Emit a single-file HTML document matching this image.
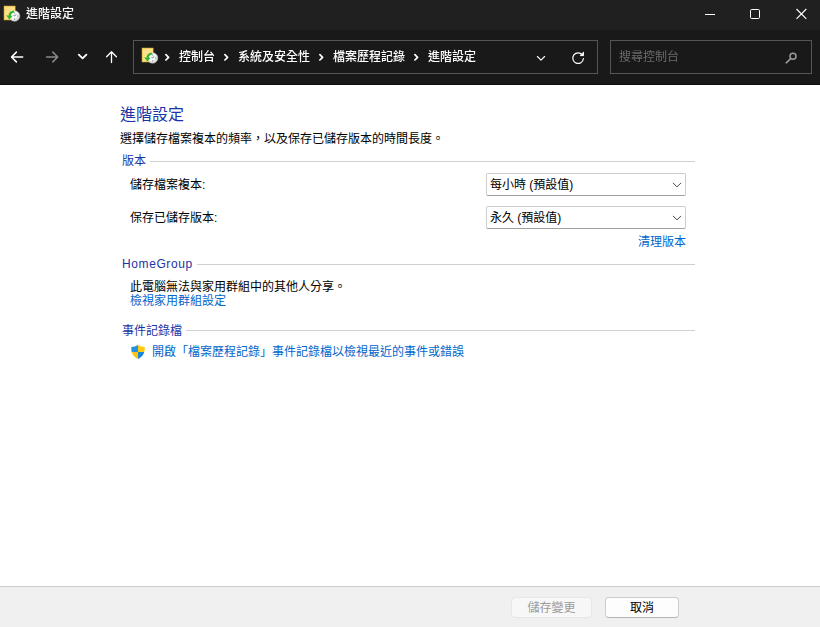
<!DOCTYPE html>
<html lang="zh-Hant">
<head>
<meta charset="utf-8">
<title>進階設定</title>
<style>
*{box-sizing:border-box;margin:0;padding:0}
html,body{width:820px;height:627px;overflow:hidden;background:#fff}
body{font-family:"Liberation Sans","Noto Sans CJK TC",sans-serif;font-size:12px;color:#000;position:relative}
.abs{position:absolute}
#titlebar{left:0;top:0;width:820px;height:30px;background:#202020}
#navbar{left:0;top:30px;width:820px;height:55px;background:#191919;border-bottom:1px solid #101010}
#title{will-change:transform;font-weight:500;left:26px;top:5px;color:#fff;font-size:12px;line-height:18px;white-space:nowrap}
.addr{left:133px;top:40px;width:465px;height:34px;border:1px solid #555;background:#191919}
.search{left:610px;top:40px;width:202px;height:34px;border:1px solid #555;background:#191919}
.crumb{will-change:transform;font-weight:500;color:#fff;font-size:12px;line-height:18px;top:48px;white-space:nowrap}
.ph{will-change:transform;color:#6a6a6a;font-size:12px;line-height:18px;top:48px;left:619px;white-space:nowrap}
svg{position:absolute;overflow:visible}
#content{left:0;top:85px;width:820px;height:501px;background:#fff}
h1{position:absolute;left:120px;top:104px;font-size:16px;font-weight:normal;color:#1b34a5;line-height:22px;white-space:nowrap}
.t{position:absolute;white-space:nowrap;font-size:12px;line-height:16px;color:#000}
.grp{color:#1b34a5}
.link{color:#0066cc}
.hr{position:absolute;height:1px;background:#d0d0d0}
.sel{position:absolute;left:486px;width:200px;height:23px;border:1px solid #cecece;border-bottom-color:#a0a0a0;background:#fff;border-radius:2px}
.sel span{position:absolute;left:3px;top:3px;font-size:12px;line-height:16px;white-space:nowrap}
#footer{left:0;top:586px;width:820px;height:41px;background:#f0f0f0;border-top:1px solid #cccccc}
.btn{position:absolute;top:597px;width:80px;height:21px;border:1px solid #cdcdcd;border-bottom-color:#b4b4b4;border-radius:4px;background:#fdfdfd;font-size:12px;line-height:21px;text-align:center}
.btn.dis{color:#9c9c9c;border-color:#e6e6e6;background:#f7f7f7}
</style>
</head>
<body>
<div id="titlebar" class="abs"></div>
<div id="navbar" class="abs"></div>
<div id="title" class="abs">進階設定</div>
<div class="abs addr"></div>
<div class="abs search"></div>
<div class="abs crumb" style="left:179px">控制台</div>
<div class="abs crumb" style="left:238px">系統及安全性</div>
<div class="abs crumb" style="left:333px">檔案歷程記錄</div>
<div class="abs crumb" style="left:428px">進階設定</div>
<div class="abs ph">搜尋控制台</div>


<!-- title icon -->
<svg style="left:3px;top:5px" width="18" height="18" viewBox="3 5 18 18">
<rect x="4.200" y="6.200" width="10.800" height="13.600" fill="#ffe08a" stroke="#ffd24d" stroke-width="0.8"/>
<defs><radialGradient id="ck1" cx="0.4" cy="0.35" r="0.75"><stop offset="0.45" stop-color="#fbfcfd"/><stop offset="1" stop-color="#b9bfc6"/></radialGradient></defs><circle cx="14.600" cy="16" r="5.200" fill="url(#ck1)" stroke="#c9ced3" stroke-width="0.5"/>
<path d="M14.600 12.600v1M14.600 18.400v1M17.200 16h1M13.600 15l1 1.200 1.600-2" stroke="#555" stroke-width="0.7" fill="none"/>
<path d="M14.200 10.900c-3.400-0.600-5.500 1.800-5.700 4.900l-2.400-0.600 3.300 4.200 3.300-3.700-2 0.100c0.300-2.100 1.700-3.500 3.700-3.400z" fill="#2db72d"/>
</svg>
<!-- window controls -->
<svg style="left:700px;top:4px" width="112" height="22" viewBox="700 4 112 22" fill="none" stroke="#fff" stroke-width="1">
<path d="M705 14.500h10"/>
<rect x="750.500" y="9.500" width="9" height="9" rx="1.200"/>
<path d="M796.500 9l9.800 9.800M806.300 9l-9.800 9.800" stroke-width="1.100"/>
</svg>
<!-- nav arrows -->
<svg style="left:8px;top:48px" width="114" height="20" viewBox="8 48 114 20" fill="none" stroke="#fff" stroke-width="1.500" stroke-linecap="round" stroke-linejoin="round">
<path d="M22.700 57H11.700M16.400 52.100l-4.900 4.900 4.900 4.900"/>
<path d="M46.600 57h11M52.800 52.100l4.900 4.900-4.900 4.900" stroke="#8a8a8a"/>
<path d="M78.800 54.600l3.800 3.800 3.800-3.800" stroke-width="1.800"/>
<path d="M111.500 62.600v-10.800M106.600 56.700l4.900-4.900 4.900 4.900" stroke-width="1.300"/>
</svg>
<!-- address icon -->
<svg style="left:141px;top:47px" width="18" height="18" viewBox="3 5 18 18">
<rect x="4.200" y="6.200" width="10.800" height="13.600" fill="#ffe08a" stroke="#ffd24d" stroke-width="0.8"/>
<defs><radialGradient id="ck2" cx="0.4" cy="0.35" r="0.75"><stop offset="0.45" stop-color="#fbfcfd"/><stop offset="1" stop-color="#b9bfc6"/></radialGradient></defs><circle cx="14.600" cy="16" r="5.200" fill="url(#ck2)" stroke="#c9ced3" stroke-width="0.5"/>
<path d="M14.600 12.600v1M14.600 18.400v1M17.200 16h1M13.600 15l1 1.200 1.600-2" stroke="#555" stroke-width="0.7" fill="none"/>
<path d="M14.200 10.900c-3.400-0.600-5.500 1.800-5.700 4.900l-2.400-0.600 3.300 4.200 3.300-3.700-2 0.100c0.300-2.100 1.700-3.500 3.700-3.400z" fill="#2db72d"/>
</svg>
<!-- breadcrumb chevrons + dropdown + refresh + search icon -->
<svg style="left:160px;top:48px" width="640" height="20" viewBox="160 48 640 20" fill="none" stroke="#fff" stroke-width="1.400" stroke-linecap="round" stroke-linejoin="round">
<path d="M165.900 54.600l2.700 2.700-2.700 2.700" stroke-width="1.700"/>
<path d="M224.900 54.600l2.700 2.700-2.700 2.700" stroke-width="1.700"/>
<path d="M319.900 54.600l2.700 2.700-2.700 2.700" stroke-width="1.700"/>
<path d="M414.900 54.600l2.700 2.700-2.700 2.700" stroke-width="1.700"/>
<path d="M537.400 56.500l3.600 3.600 3.600-3.600" stroke-width="1.100"/>
<path d="M582.300 54.900A5.300 5.300 0 1 0 583.380 58.700" stroke-width="1.200"/>
<path d="M583.500 52.600v3h-3z" stroke-width="1" fill="#fff"/>
<circle cx="793" cy="56.300" r="3" stroke="#9a9a9a" stroke-width="1.500"/>
<path d="M790.700 58.600l-4.500 4.200" stroke="#9a9a9a" stroke-width="1.600"/>
</svg>
<div id="content" class="abs"></div>
<h1>進階設定</h1>
<div class="t" style="left:120px;top:131px">選擇儲存檔案複本的頻率，以及保存已儲存版本的時間長度。</div>
<div class="t grp" style="left:122px;top:153px">版本</div>
<div class="hr" style="left:150px;top:161px;width:545px"></div>
<div class="t" style="left:130px;top:177px">儲存檔案複本:</div>
<div class="t" style="left:130px;top:210px">保存已儲存版本:</div>
<div class="sel" style="top:173px"><span>每小時 (預設值)</span></div>
<div class="sel" style="top:206px"><span>永久 (預設值)</span></div>
<div class="t link" style="left:638px;top:234px">清理版本</div>
<div class="t grp" style="left:122px;top:256px;letter-spacing:0.6px">HomeGroup</div>
<div class="hr" style="left:197px;top:264px;width:498px"></div>
<div class="t" style="left:130px;top:279px">此電腦無法與家用群組中的其他人分享。</div>
<div class="t link" style="left:130px;top:293px">檢視家用群組設定</div>
<div class="t grp" style="left:122px;top:323px">事件記錄檔</div>
<div class="hr" style="left:186px;top:330px;width:509px"></div>
<div class="t link" style="left:152px;top:344px">開啟「檔案歷程記錄」事件記錄檔以檢視最近的事件或錯誤</div>


<svg style="left:131px;top:345px" width="14" height="14" viewBox="0 0 14 14">
<defs><clipPath id="sh"><path d="M7 0C5 1.300 2.500 1.900 0.300 2c-0.300 5 1.200 9.500 6.700 12 5.500-2.500 7-7 6.700-12C11.500 1.900 9 1.300 7 0z"/></clipPath></defs>
<g clip-path="url(#sh)">
<rect x="0" y="0" width="7" height="7" fill="#2492dc"/>
<rect x="7" y="0" width="7" height="7" fill="#ffc90e"/>
<rect x="0" y="7" width="7" height="7" fill="#ffc417"/>
<rect x="7" y="7" width="7" height="7" fill="#1c86d6"/>
</g>
</svg>
<!-- select chevrons -->
<svg style="left:670px;top:180px" width="14" height="44" viewBox="670 180 14 44" fill="none" stroke="#444" stroke-width="1">
<path d="M673 182.900l4 4 4-4"/>
<path d="M673 215.900l4 4 4-4"/>
</svg>
<div id="footer" class="abs"></div>
<div class="btn dis" style="left:511px;width:81px">儲存變更</div>
<div class="btn" style="left:605px;width:74px">取消</div>
</body>
</html>
